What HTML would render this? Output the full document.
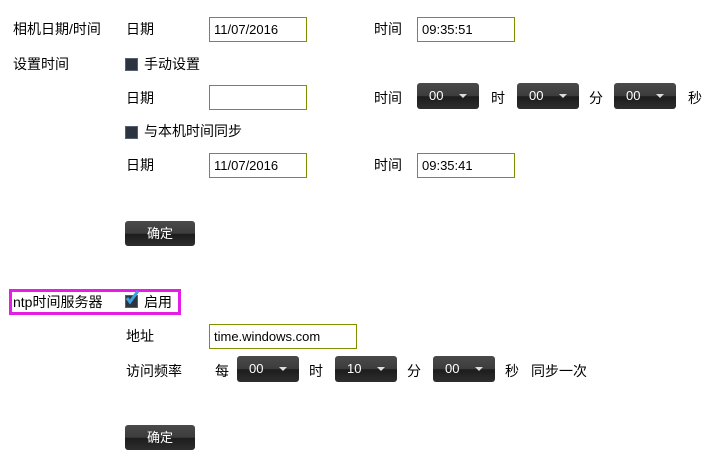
<!DOCTYPE html>
<html><head><meta charset="utf-8"><style>
body{margin:0;width:707px;height:470px;background:#fff;font-family:"Liberation Sans","Noto Sans CJK SC",sans-serif;font-size:14px;color:#000;position:relative;overflow:hidden}
.t{position:absolute;line-height:16px;white-space:nowrap}
.in{position:absolute;box-sizing:border-box;border:1px solid #7f9000;height:25px;padding:0 0 0 4px;line-height:23px;font-size:13px}
.sel{position:absolute;box-sizing:border-box;width:62px;height:26px;border-radius:3px;background:linear-gradient(#4a4a4a 0,#3c3c3c 50%,#1c1c1c 52%,#2e2e2e 100%);color:#fff;font-size:13px;line-height:26px}
.sel span{position:absolute;left:12px}
.sel i{position:absolute;right:12px;top:11px;border-left:4px solid transparent;border-right:4px solid transparent;border-top:4px solid #ddd}
.cb{position:absolute;width:11px;height:11px;background:#2c3440;border:1px solid #556070}
.btn{position:absolute;width:70px;height:25px;border-radius:3px;background:linear-gradient(#4a4a4a 0,#3c3c3c 50%,#1c1c1c 52%,#2e2e2e 100%);color:#fff;font-size:13px;text-align:center;line-height:25px}
</style></head><body>
<div class="t" style="left:13px;top:21px">相机日期/时间</div>
<div class="t" style="left:126px;top:21px">日期</div>
<div class="in" style="left:209px;top:17px;width:98px">11/07/2016</div>
<div class="t" style="left:374px;top:21px">时间</div>
<div class="in" style="left:417px;top:17px;width:98px">09:35:51</div>

<div class="t" style="left:13px;top:56px">设置时间</div>
<div class="cb" style="left:125px;top:58px"></div>
<div class="t" style="left:144px;top:56px">手动设置</div>

<div class="t" style="left:126px;top:90px">日期</div>
<div class="in" style="left:209px;top:85px;width:98px"></div>
<div class="t" style="left:374px;top:90px">时间</div>
<div class="sel" style="left:417px;top:83px"><span>00</span><i></i></div>
<div class="t" style="left:491px;top:90px">时</div>
<div class="sel" style="left:517px;top:83px"><span>00</span><i></i></div>
<div class="t" style="left:589px;top:90px">分</div>
<div class="sel" style="left:614px;top:83px"><span>00</span><i></i></div>
<div class="t" style="left:688px;top:90px">秒</div>

<div class="cb" style="left:125px;top:126px"></div>
<div class="t" style="left:144px;top:123px">与本机时间同步</div>

<div class="t" style="left:126px;top:157px">日期</div>
<div class="in" style="left:209px;top:153px;width:98px">11/07/2016</div>
<div class="t" style="left:374px;top:157px">时间</div>
<div class="in" style="left:417px;top:153px;width:98px">09:35:41</div>

<div class="btn" style="left:125px;top:221px">确定</div>

<div style="position:absolute;left:9px;top:289px;width:166px;height:20px;border:3px solid #e51ee5"></div>
<div class="t" style="left:13px;top:294px">ntp时间服务器</div>
<div class="cb" style="left:125px;top:295px"></div>
<svg style="position:absolute;left:124px;top:289px" width="16" height="18"><path d="M3 9 L6 13 L14 2" stroke="#3aa0e0" stroke-width="3" fill="none"/></svg>
<div class="t" style="left:144px;top:294px">启用</div>

<div class="t" style="left:126px;top:328px">地址</div>
<div class="in" style="left:209px;top:324px;width:148px">time.windows.com</div>

<div class="t" style="left:126px;top:363px">访问频率</div>
<div class="t" style="left:215px;top:363px">每</div>
<div class="sel" style="left:237px;top:356px"><span>00</span><i></i></div>
<div class="t" style="left:309px;top:363px">时</div>
<div class="sel" style="left:335px;top:356px"><span>10</span><i></i></div>
<div class="t" style="left:407px;top:363px">分</div>
<div class="sel" style="left:433px;top:356px"><span>00</span><i></i></div>
<div class="t" style="left:505px;top:363px">秒</div>
<div class="t" style="left:531px;top:363px">同步一次</div>

<div class="btn" style="left:125px;top:425px">确定</div>
</body></html>
